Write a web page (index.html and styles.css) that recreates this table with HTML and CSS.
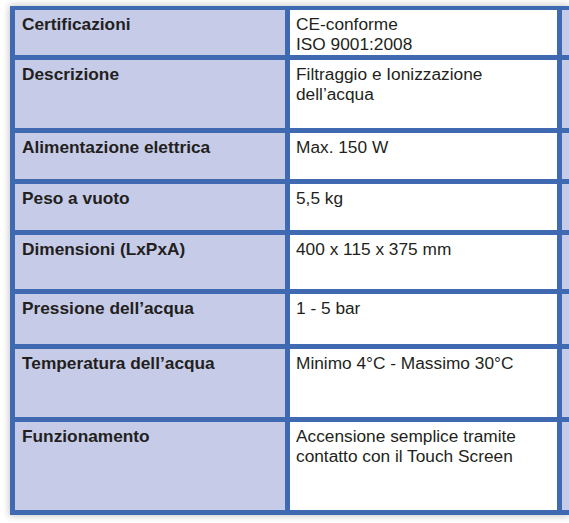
FILE: index.html
```html
<!DOCTYPE html>
<html lang="it">
<head>
<meta charset="utf-8">
<title>Specifiche</title>
<link rel="stylesheet" href="styles.css">
</head>
<body>
<div class="spec">
  <div class="label">Certificazioni</div><div class="value">CE-conforme<br>ISO 9001:2008</div><div class="extra"></div>
  <div class="label">Descrizione</div><div class="value">Filtraggio e Ionizzazione<br>dell’acqua</div><div class="extra"></div>
  <div class="label">Alimentazione elettrica</div><div class="value">Max. 150 W</div><div class="extra"></div>
  <div class="label">Peso a vuoto</div><div class="value">5,5 kg</div><div class="extra"></div>
  <div class="label">Dimensioni (LxPxA)</div><div class="value">400 x 115 x 375 mm</div><div class="extra"></div>
  <div class="label">Pressione dell’acqua</div><div class="value">1 - 5 bar</div><div class="extra"></div>
  <div class="label">Temperatura dell’acqua</div><div class="value">Minimo 4°C - Massimo 30°C</div><div class="extra"></div>
  <div class="label">Funzionamento</div><div class="value">Accensione semplice tramite<br>contatto con il Touch Screen</div><div class="extra"></div>
</div>
</body>
</html>
```
FILE: styles.css
```css
html, body {
  margin: 0;
  padding: 0;
  overflow: hidden;
  background: #ffffff;
}
body {
  width: 569px;
  height: 523px;
}
.spec {
  box-sizing: border-box;
  margin: 6px 0 0 10px;
  width: 559px;
  display: grid;
  grid-template-columns: 270px 267px 1fr;
  grid-template-rows: 45px 68px 46px 46px 54px 50px 68px 88px;
  gap: 5px;
  padding: 4px 0 5px 5px;
  background: #3f69b0;
  box-shadow: 0 0 7px 1px rgba(0, 0, 0, 0.22);
  font-family: "Liberation Sans", Arial, sans-serif;
  font-size: 17.3px;
  line-height: 20px;
  color: #231f20;
}
.label, .value {
  padding: 4px 6px 0 7px;
  white-space: nowrap;
}
.label {
  background: #c6cbe8;
  font-weight: bold;
}
.value {
  background: #ffffff;
  padding-left: 6px;
}
.extra {
  background: #c6cbe8;
}
```
